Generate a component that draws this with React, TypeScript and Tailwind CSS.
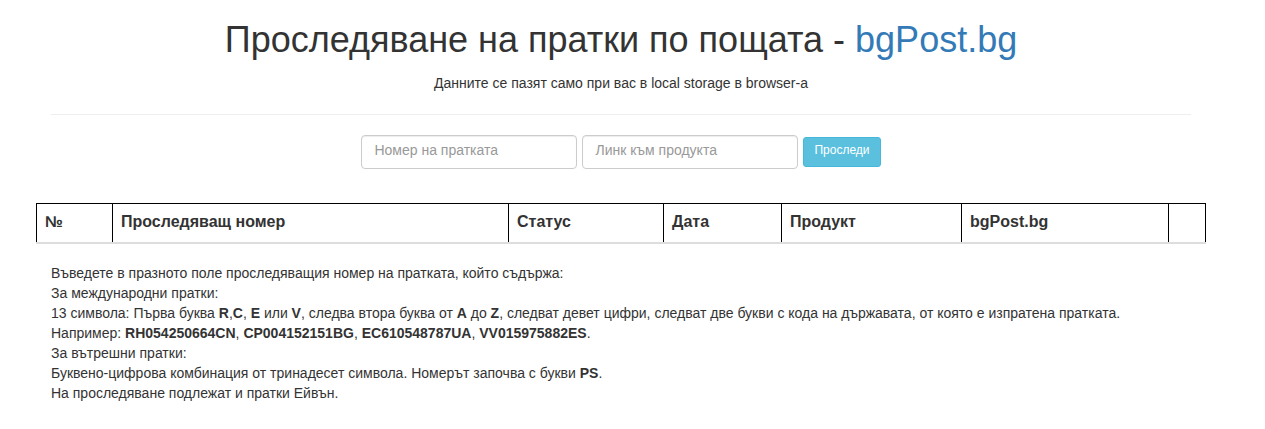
export default function App() {
    const cols = [
        { label: "№", w: "w-[76px]" },
        { label: "Проследяващ номер", w: "w-[396px]" },
        { label: "Статус", w: "w-[155px]" },
        { label: "Дата", w: "w-[118px]" },
        { label: "Продукт", w: "w-[180px]" },
        { label: "bgPost.bg", w: "w-[207px]" },
        { label: "", w: "w-[38px]" },
    ]

    return (
        <main className="min-h-screen bg-white text-[#333] font-['Liberation_Sans',Arial,sans-serif] text-[14px] leading-[20px]">
            <div className="ml-[36px] w-[1170px] px-[15px]">

                {/* header */}
                <h1 className="mt-[20px] mb-[13px] text-center text-[36px] leading-[40px] font-normal">
                    Проследяване на пратки по пощата - <a href="#" className="text-[#337ab7]">bgPost.bg</a>
                </h1>
                <p className="text-center">Данните се пазят само при вас в local storage в browser-a</p>
                <hr className="mt-[21px] mb-[20px] border-0 border-t border-[#eee]" />

                {/* form */}
                <div className="flex justify-center items-center gap-[5px]">
                    <input
                        placeholder="Номер на пратката"
                        className="w-[216px] h-[34px] px-[12px] pt-[4px] pb-[8px] border border-[#ccc] rounded-[4px] text-[14px] placeholder:text-[#999] shadow-[inset_0_1px_1px_rgba(0,0,0,0.075)] outline-none"
                    />
                    <input
                        placeholder="Линк към продукта"
                        className="w-[216px] h-[34px] px-[12px] pt-[4px] pb-[8px] border border-[#ccc] rounded-[4px] text-[14px] placeholder:text-[#999] shadow-[inset_0_1px_1px_rgba(0,0,0,0.075)] outline-none"
                    />
                    <button className="h-[30px] px-[10px] pb-[4px] bg-[#5bc0de] border border-[#46b8da] rounded-[3px] text-white text-[12px] leading-[18px]">
                        Проследи
                    </button>
                </div>
            </div>

            {/* table */}
            <div className="ml-[36px] w-[1170px] mt-[34px]">
                <div className="flex border-t border-black border-b-2 border-b-[#ddd]">
                    {cols.map((c, i) => (
                        <div
                            key={i}
                            className={`${c.w} shrink-0 px-[8px] pt-[7px] pb-[9px] text-[16px] leading-[22px] font-bold border-l border-black ${i === cols.length - 1 ? "border-r" : ""}`}
                        >
                            {c.label}
                        </div>
                    ))}
                </div>
            </div>

            {/* help text */}
            <div className="ml-[51px] mt-[19px]">
                <div>Въведете в празното поле проследяващия номер на пратката, който съдържа:</div>
                <div>За международни пратки:</div>
                <div>
                    13 символа: Първа буква <b>R</b>,<b>C</b>, <b>E</b> или <b>V</b>, следва втора буква от <b>A</b> до <b>Z</b>, следват девет цифри, следват две букви с кода на държавата, от която е изпратена пратката.
                </div>
                <div>
                    Например: <b>RH054250664CN</b>, <b>CP004152151BG</b>, <b>EC610548787UA</b>, <b>VV015975882ES</b>.
                </div>
                <div>За вътрешни пратки:</div>
                <div>Буквено-цифрова комбинация от тринадесет символа. Номерът започва с букви <b>PS</b>.</div>
                <div>На проследяване подлежат и пратки Ейвън.</div>
            </div>
        </main>
    )
}
